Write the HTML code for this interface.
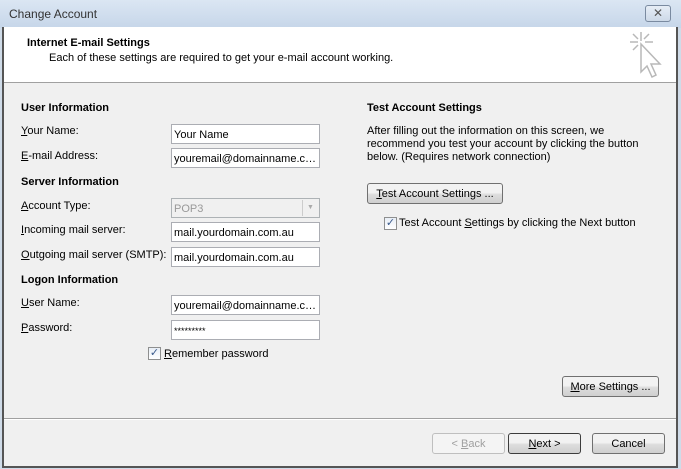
<!DOCTYPE html>
<html><head><meta charset="utf-8"><style>
*{margin:0;padding:0;box-sizing:border-box}
body{width:681px;height:469px;overflow:hidden;background:#cfdbe8;font-family:"Liberation Sans",sans-serif;font-size:11px;color:#000;position:relative}
.a{position:absolute;white-space:nowrap}
.title{left:0;top:0;width:681px;height:28px;background:linear-gradient(#dbe6f3,#c6d6e9)}
.win{left:2px;top:27px;width:676px;height:441px;background:#f0f0f0;border-left:2px solid #555;border-right:2px solid #555;border-bottom:2px solid #555}
.hdr{left:4px;top:27px;width:672px;height:56px;background:#fff;border-bottom:1px solid #a0a0a0}
.b{font-weight:bold}
.inp{position:absolute;left:171px;width:149px;height:20px;border:1px solid #abadb3;background:#fff;padding:4px 2px 0;overflow:hidden;white-space:nowrap;text-overflow:ellipsis}
.btn{position:absolute;height:21px;border:1px solid #707070;border-radius:3px;background:linear-gradient(#f2f2f2 45%,#dddddd 55%,#cfcfcf);text-align:center;line-height:20px}
.cb{position:absolute;width:13px;height:13px;border:1px solid #8e8f8f;background:linear-gradient(#e8eef6,#fff);color:#3a5a8c;font-size:11px;line-height:11px;text-align:center}
u{text-decoration:underline}
</style></head><body>
<div class="a title"></div>
<div class="a" style="left:9px;top:7px;font-size:12px;color:#333">Change Account</div>
<div class="a" style="left:645px;top:5px;width:26px;height:17px;border:1px solid #7a8aa0;border-radius:3px;background:linear-gradient(#e6edf6,#cdd9e8);text-align:center;font-size:12px;line-height:14px;color:#555">✕</div>
<div class="a win"></div>
<div class="a hdr"></div>
<div class="a b" style="left:27px;top:37px">Internet E-mail Settings</div>
<div class="a" style="left:49px;top:52px">Each of these settings are required to get your e-mail account working.</div>
<svg class="a" style="left:625px;top:28px" width="40" height="52" viewBox="0 0 40 52" fill="none" stroke="#b8b8b8" stroke-width="1.5">
<path d="M16 4v9M5 14h8M20 14h8M8 6l5 5M24 6l-5 5M8 22l5-5"/>
<path d="M16 16v28l6-6 5 11 4-2-5-11 9 0z" fill="#fff"/>
</svg>
<div class="a b" style="left:21px;top:102px">User Information</div>
<div class="a" style="left:21px;top:125px"><u>Y</u>our Name:</div>
<div class="a" style="left:21px;top:150px"><u>E</u>-mail Address:</div>
<div class="a b" style="left:21px;top:176px">Server Information</div>
<div class="a" style="left:21px;top:200px"><u>A</u>ccount Type:</div>
<div class="a" style="left:21px;top:224px"><u>I</u>ncoming mail server:</div>
<div class="a" style="left:21px;top:249px"><u>O</u>utgoing mail server (SMTP):</div>
<div class="a b" style="left:21px;top:274px">Logon Information</div>
<div class="a" style="left:21px;top:297px"><u>U</u>ser Name:</div>
<div class="a" style="left:21px;top:322px"><u>P</u>assword:</div>
<div class="inp" style="top:124px">Your Name</div>
<div class="inp" style="top:148px">youremail@domainname.com.au</div>
<div class="inp" style="top:198px;background:#f0f0f0;border-color:#adb2b5;color:#999">POP3<span style="position:absolute;right:1px;top:1px;width:16px;height:16px;border-left:1px solid #ccc;font-size:7px;line-height:16px;text-align:center;color:#aaa">▼</span></div>
<div class="inp" style="top:222px">mail.yourdomain.com.au</div>
<div class="inp" style="top:247px">mail.yourdomain.com.au</div>
<div class="inp" style="top:295px">youremail@domainname.com.au</div>
<div class="inp" style="top:320px;font-size:9px;padding-top:5px">*********</div>
<div class="cb" style="left:148px;top:347px">✓</div>
<div class="a" style="left:164px;top:348px"><u>R</u>emember password</div>
<div class="a b" style="left:367px;top:102px">Test Account Settings</div>
<div class="a" style="left:367px;top:125px;line-height:13px">After filling out the information on this screen, we<br>recommend you test your account by clicking the button<br>below. (Requires network connection)</div>
<div class="btn" style="left:367px;top:183px;width:136px"><u>T</u>est Account Settings ...</div>
<div class="cb" style="left:384px;top:217px">✓</div>
<div class="a" style="left:399px;top:217px">Test Account <u>S</u>ettings by clicking the Next button</div>
<div class="btn" style="left:562px;top:376px;width:97px"><u>M</u>ore Settings ...</div>
<div class="a" style="left:4px;top:418px;width:672px;height:2px;border-top:1px solid #a0a0a0;border-bottom:1px solid #fff"></div>
<div class="btn" style="left:432px;top:433px;width:73px;background:#f4f4f4;border-color:#bfbfbf;color:#a0a0a0">&lt; <u>B</u>ack</div>
<div class="btn" style="left:508px;top:433px;width:73px;border-color:#3c3c3c"><u>N</u>ext &gt;</div>
<div class="btn" style="left:592px;top:433px;width:73px">Cancel</div>
</body></html>
